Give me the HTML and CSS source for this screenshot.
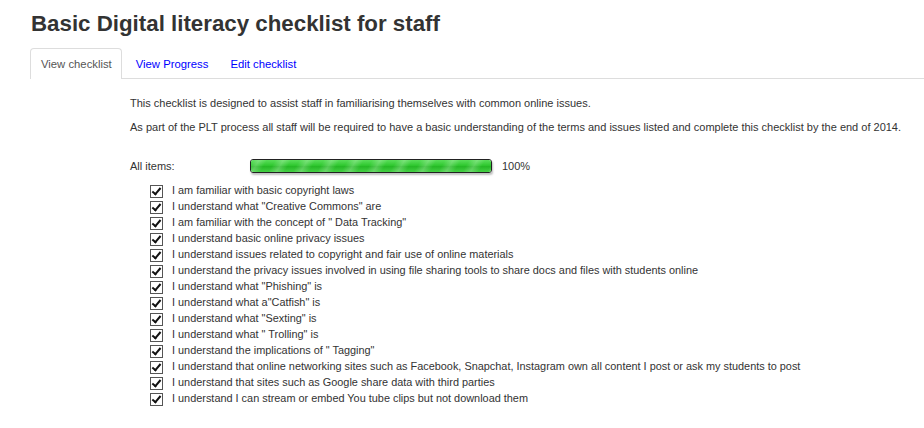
FILE: index.html
```html
<!DOCTYPE html>
<html lang="en">
<head>
    <meta charset="UTF-8">
    <title>Basic Digital literacy checklist for staff</title>
    <link rel="stylesheet" href="styles.css">
</head>
<body>
    <h1 class="title">Basic Digital literacy checklist for staff</h1>
    <ul class="tabs">
        <li class="tab active">View checklist</li>
        <li class="tab"><a href="#">View Progress</a></li>
        <li class="tab"><a href="#">Edit checklist</a></li>
    </ul>
    <div class="content">
        <p class="intro">This checklist is designed to assist staff in familiarising themselves with common online issues.</p>
        <p class="intro">As part of the PLT process all staff will be required to have a basic understanding of the terms and issues listed and complete this checklist by the end of 2014.</p>

        <div class="progress-row">
            <span class="progress-label">All items:</span>
            <div class="progress-bar"><div class="progress-fill"></div></div>
            <span class="progress-value">100%</span>
        </div>

        <ul class="items">
            <li class="item"><span class="check"></span>I am familiar with basic copyright laws</li>
            <li class="item"><span class="check"></span>I understand what "Creative Commons" are</li>
            <li class="item"><span class="check"></span>I am familiar with the concept of " Data Tracking"</li>
            <li class="item"><span class="check"></span>I understand basic online privacy issues</li>
            <li class="item"><span class="check"></span>I understand issues related to copyright and fair use of online materials</li>
            <li class="item"><span class="check"></span>I understand the privacy issues involved in using file sharing tools to share docs and files with students online</li>
            <li class="item"><span class="check"></span>I understand what "Phishing" is</li>
            <li class="item"><span class="check"></span>I understand what a"Catfish" is</li>
            <li class="item"><span class="check"></span>I understand what "Sexting" is</li>
            <li class="item"><span class="check"></span>I understand what " Trolling" is</li>
            <li class="item"><span class="check"></span>I understand the implications of " Tagging"</li>
            <li class="item"><span class="check"></span>I understand that online networking sites such as Facebook, Snapchat, Instagram own all content I post or ask my students to post</li>
            <li class="item"><span class="check"></span>I understand that sites such as Google share data with third parties</li>
            <li class="item"><span class="check"></span>I understand I can stream or embed You tube clips but not download them</li>
        </ul>
    </div>
</body>
</html>
```

FILE: styles.css
```css
body {
    margin: 0;
    background: #fff;
    color: #333;
    font-family: "Liberation Sans", Arial, sans-serif;
    font-size: 11px;
}
.title {
    margin: 0;
    padding: 10px 0 0 31px;
    font-size: 22.3px;
    line-height: 28px;
    font-weight: bold;
    color: #333;
}
.tabs {
    list-style: none;
    margin: 10px 0 0 30px;
    padding: 0;
    display: flex;
    border-bottom: 1px solid #ddd;
    height: 30px;
    font-size: 11.3px;
}
.tab {
    padding: 0 9px 0 10px;
    line-height: 30px;
    border: 1px solid transparent;
    border-bottom: none;
    margin-right: 1px;
}
.tab a {
    color: #00f;
    text-decoration: none;
}
.tab.active {
    color: #555;
    background: #fff;
    border-color: #ddd;
    border-radius: 4px 4px 0 0;
    height: 30px;
    margin-bottom: -1px;
    margin-right: 3px;
}
.content {
    padding-left: 130px;
    padding-top: 17px;
}
.intro {
    margin: 0 0 10px 0;
    line-height: 14px;
}
.progress-row {
    display: flex;
    align-items: center;
    margin-top: 24px;
    height: 16px;
}
.progress-label {
    width: 120px;
}
.progress-bar {
    width: 240px;
    height: 12px;
    border: 1px solid #222;
    border-radius: 3px;
    box-shadow: 1px 2px 2px rgba(0, 0, 0, 0.25);
    overflow: hidden;
}
.progress-fill {
    width: 100%;
    height: 100%;
    background:
        repeating-linear-gradient(120deg, rgba(255, 255, 255, 0) 0, rgba(255, 255, 255, 0.22) 7px, rgba(255, 255, 255, 0) 14px, rgba(255, 255, 255, 0) 21px),
        linear-gradient(#5ade5a, #30c830 45%, #26b826 55%, #44d044);
}
.progress-value {
    margin-left: 10px;
}
.items {
    list-style: none;
    margin: 8px 0 0 20px;
    padding: 0;
    font-size: 10.9px;
}
.item {
    display: flex;
    align-items: center;
    height: 16px;
    line-height: 16px;
}
.check {
    width: 11px;
    height: 11px;
    border: 1px solid #555;
    background: #fff;
    margin-right: 9px;
    position: relative;
    flex: none;
    top: 1px;
}
.check::after {
    content: "";
    position: absolute;
    left: 3px;
    top: 0;
    width: 3px;
    height: 7px;
    border: solid #111;
    border-width: 0 2px 2px 0;
    transform: rotate(40deg);
}
```
